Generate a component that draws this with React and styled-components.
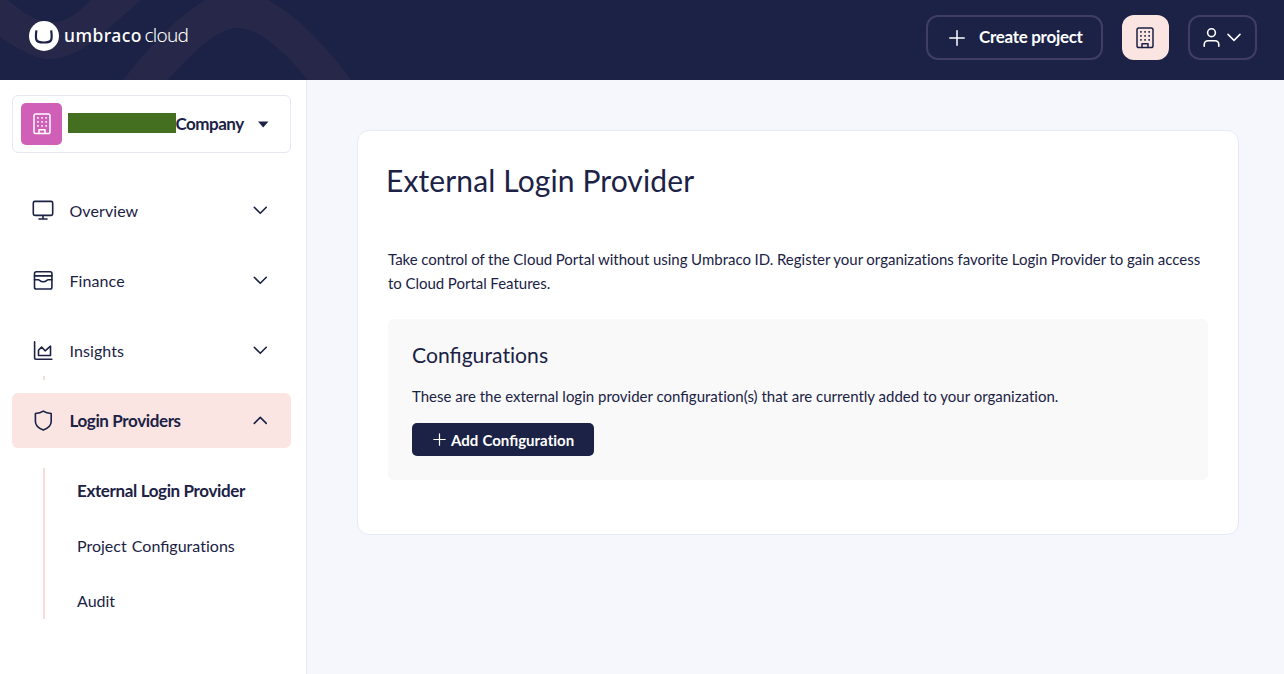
import React from "react";
import styled, { createGlobalStyle } from "styled-components";

const navy = "#1b2245";
const blush = "#fbe5e3";

const GlobalStyle = createGlobalStyle`
  * { box-sizing: border-box; }
  body { margin: 0; background: #f6f7fc; color: ${navy}; font-family: Lato, "Liberation Sans", sans-serif; }
  button { font: inherit; color: inherit; cursor: pointer; padding: 0; }
  h1, h2, p, ul { margin: 0; padding: 0; font-weight: 400; }
  ul { list-style: none; }
  svg { display: block; flex: none; }
`;

const Page = styled.div`
  display: flex;
  flex-direction: column;
  height: 674px;
  overflow: hidden;
`;

const Header = styled.header`
  position: relative;
  flex: none;
  height: 80px;
  padding: 0 27px 5px 28px;
  display: flex;
  align-items: center;
  justify-content: space-between;
  background: ${navy};
`;

const Waves = styled.svg`
  position: absolute;
  left: 0;
  top: 0;
`;

const Brand = styled.div`
  position: relative;
  display: flex;
  align-items: center;
  color: #fff;
  padding-bottom: 3px;
`;

const BrandText = styled.span`
  font: ${(p) => (p.$light ? "300 19px" : "500 17.5px")}/24px "Noto Sans", "Open Sans", sans-serif;
  letter-spacing: ${(p) => (p.$light ? "-0.7px" : "0.45px")};
  margin-left: ${(p) => (p.$light ? 2.5 : 5)}px;
  margin-top: -2px;
`;

const Actions = styled.div`
  position: relative;
  display: flex;
  align-items: center;
  gap: 19px;
`;

const HeaderButton = styled.button`
  display: flex;
  align-items: center;
  width: ${(p) => p.$width}px;
  height: 45px;
  padding-left: ${(p) => p.$inset}px;
  border-radius: 12px;
  border: ${(p) => (p.$active ? "0" : "2px solid #413e66")};
  background: ${(p) => (p.$active ? blush : "transparent")};
  color: ${(p) => (p.$active ? navy : "#fff")};
  font-weight: 700;
  font-size: 17px;
  letter-spacing: -0.3px;
  line-height: 24px;
`;

const ButtonLabel = styled.span`
  margin: -2px 0 0 14px;
  white-space: nowrap;
`;

const Body = styled.div`
  display: flex;
  flex: 1;
  min-height: 0;
`;

const Sidebar = styled.aside`
  flex: none;
  width: 307px;
  padding: 15px 15px 0 12px;
  background: #fff;
  border-right: 1px solid #e6e8f5;
`;

const CompanySelect = styled.button`
  display: flex;
  align-items: center;
  width: 279px;
  height: 58px;
  padding-left: 8px;
  background: #fff;
  border: 1px solid #e7e7f6;
  border-radius: 6px;
`;

const CompanyBadge = styled.span`
  display: grid;
  place-items: center;
  width: 41px;
  height: 42px;
  border-radius: 5px;
  background: #d05fb8;
  color: #fff;
`;

const Redaction = styled.span`
  width: 108px;
  height: 20px;
  margin: -2px 0 0 6px;
  background: #456f20;
`;

const CompanyName = styled.span`
  width: 82px;
  margin: -1px 0 0 -0.5px;
  text-align: left;
  font-weight: 700;
  font-size: 17px;
  letter-spacing: -0.5px;
  line-height: 24px;
`;

const Nav = styled.nav`
  display: flex;
  flex-direction: column;
  gap: 15px;
  margin-top: 30px;
`;

const NavItem = styled.a`
  position: relative;
  display: flex;
  align-items: center;
  height: 55px;
  padding: 0 24px 0 19px;
  border-radius: 6px;
  background: ${(p) => (p.$active ? blush : "transparent")};
  font-weight: ${(p) => (p.$active ? 700 : 400)};
  font-size: ${(p) => (p.$active ? 17 : 16)}px;
  letter-spacing: ${(p) => (p.$active ? "-0.38px" : "0.08px")};

  &::before {
    content: "";
    display: ${(p) => (p.$active ? "block" : "none")};
    position: absolute;
    left: 31px;
    top: -17px;
    width: 2px;
    height: 4px;
    background: #fbdcda;
  }
`;

const NavLabel = styled.span`
  flex: 1;
  margin: 1px 0 0 14.5px;
  line-height: 24px;
`;

const SubNav = styled.ul`
  margin: 5px 0 0 31px;
  height: 151px;
  border-left: 2px solid #fbdcda;
  padding-left: 32px;
`;

const SubItem = styled.li`
  height: 55px;
  padding-top: 11px;
  line-height: 24px;
  font-size: ${(p) => (p.$active ? 17 : 16)}px;
  letter-spacing: ${(p) => (p.$active ? "-0.36px" : "normal")};
  word-spacing: ${(p) => (p.$active ? "normal" : "1px")};
  font-weight: ${(p) => (p.$active ? 700 : 400)};
`;

const Main = styled.main`
  flex: 1;
  padding: 50px 45px 0 50px;
`;

const Card = styled.section`
  height: 405px;
  padding: 27px 30px 0;
  background: #fff;
  border: 1px solid #e7e9f6;
  border-radius: 12px;
`;

const Title = styled.h1`
  margin-left: -2px;
  font-size: 30px;
  line-height: 45px;
  letter-spacing: 0.12px;
`;

const Text = styled.p`
  font-size: 15px;
  line-height: 24px;
`;

const Intro = styled(Text)`
  margin-top: 44px;
  font-variant-ligatures: none;
  word-spacing: -0.27px;
`;

const Panel = styled.section`
  margin-top: 24px;
  height: 161px;
  padding: 19px 24px;
  border-radius: 6px;
  background: #f9f9f9;
`;

const PanelTitle = styled.h2`
  font-size: 21.15px;
  line-height: 35px;
  margin-bottom: 11px;
`;

const AddButton = styled.button`
  display: flex;
  align-items: center;
  gap: 5px;
  width: 182px;
  height: 33px;
  margin-top: 15px;
  padding-left: 21px;
  border: 0;
  border-radius: 5px;
  background: ${navy};
  color: #fff;
  font-weight: 700;
  font-size: 15px;
  word-spacing: 0.5px;
  line-height: 24px;
  white-space: nowrap;
`;

const NoLigature = styled.span`
  font-variant-ligatures: none;
`;

// Lato joins "t" and "i" by default; keep that pair apart while leaving "fi" joined.
const Copy = ({ children }) => (
  <span>
    {children.split(/(ti)/).map((part, i) => (part === "ti" ? <NoLigature key={i}>{part}</NoLigature> : part))}
  </span>
);

const Icon = ({ w, h, sw = 1.6, children }) => (
  <svg width={w} height={h} viewBox={`0 0 ${w} ${h}`} fill="none" stroke="currentColor" strokeWidth={sw} strokeLinecap="round" strokeLinejoin="round">
    {children}
  </svg>
);

const Building = () => (
  <Icon w={18} h={22} sw={1.5}>
    <rect x="1" y="1" width="16" height="19.6" rx="1.8" />
    <path d="M6 20.500v-3.800h6v3.800" />
    <g fill="currentColor" stroke="none">
      {[4.1, 8.2, 12.3].map((x) => [4, 8, 12].map((y) => <rect key={`${x}-${y}`} x={x} y={y} width="1.7" height="1.7" rx=".4" />))}
    </g>
  </Icon>
);

const Plus = ({ size, sw }) => (
  <Icon w={size} h={size} sw={sw}>
    <path d={`M${size / 2} .8V${size - 0.8}M.8 ${size / 2}H${size - 0.8}`} />
  </Icon>
);

const Chevron = ({ up }) => (
  <Icon w={14} h={10} sw={1.6}>
    <path d={up ? "M1.300 7.400 7.300 1.400l6 6" : "M1.300 1.300l6 6 6-6"} />
  </Icon>
);

const navIcons = {
  Overview: (
    <>
      <rect x="2.300" y="2.400" width="19.400" height="14" rx="1.6" />
      <path d="M12 16.600v3.200M8 20h8" />
    </>
  ),
  Finance: (
    <>
      <rect x="3.500" y="2.800" width="17.4" height="17.2" rx="1.8" />
      <path d="M3.500 6.900h17.4M3.500 10.700h3.800c1.300 0 1.500 2.100 4.900 2.100s3.600-2.100 4.900-2.100h3.800" />
    </>
  ),
  Insights: (
    <>
      <path d="M3.600 2.900v16.200q0 1.200 1.200 1.200h16" />
      <path d="M7.500 16.500v-5.300L10.600 8.100l3.500 3.700 5.400-4.600v9.300Z" />
    </>
  ),
  "Login Providers": <path d="M12.300 2.100c2.200 1.500 4.800 2.200 7.900 2.400v8c0 3.800-3.400 6.800-7.900 8.600-4.500-1.800-7.900-4.800-7.900-8.600v-8c3.100-.2 5.700-.9 7.900-2.400Z" />,
};

const entries = ["Overview", "Finance", "Insights", "Login Providers"];
const subEntries = ["External Login Provider", "Project Configurations", "Audit"];

export default function App() {
  return (
    <Page>
      <GlobalStyle />
      <Header>
        <Waves width="380" height="80" viewBox="0 0 380 80" fill="#272849">
          <path d="M0 0H8C28 17 39 22 53 22S76 14 91 0H141C113 24 96 42 80 50C65 58 57 59 48 59S27 55 0 37Z" />
          <path d="M123 80C151 45 174 20 205 0H268C299 17 327 47 351 80H308C280 46 256 28 238 28C219 28 197 48 168 80Z" />
        </Waves>
        <Brand>
          <svg width="31" height="32" viewBox="0 0 31 32">
            <circle cx="16" cy="16" r="15" fill="#fff" />
            <path d="M8.400 10.300c-.6 4.500-.6 8 .1 9.700.8 2.100 3.400 2.500 7.300 2.500s6.500-.4 7.300-2.500c.7-1.700.7-5.200.1-9.700" fill="none" stroke={navy} strokeWidth="2.200" />
          </svg>
          <BrandText>umbraco</BrandText>
          <BrandText $light>cloud</BrandText>
        </Brand>
        <Actions>
          <HeaderButton $width={177} $inset={21}>
            <Plus size={16} sw={1.500} />
            <ButtonLabel>Create project</ButtonLabel>
          </HeaderButton>
          <HeaderButton $width={47} $inset={14} $active aria-label="Organization">
            <Building />
          </HeaderButton>
          <HeaderButton $width={69} $inset={13} aria-label="Account">
            <Icon w={17} h={20} sw={1.600}>
              <circle cx="8.500" cy="4.700" r="3.900" />
              <path d="M1.200 18.300v-1.500c0-2.700 1.500-4 4-4h6.600c2.500 0 4 1.300 4 4v1.500" />
            </Icon>
            <svg width="22" height="10" viewBox="-8 0 22 10" fill="none" stroke="currentColor" strokeWidth="1.500" strokeLinecap="round">
              <path d="M0 1.400 6 7.400l6-6" />
            </svg>
          </HeaderButton>
        </Actions>
      </Header>
      <Body>
        <Sidebar>
          <CompanySelect>
            <CompanyBadge><Building /></CompanyBadge>
            <Redaction />
            <CompanyName>Company</CompanyName>
            <svg width="11" height="7" viewBox="0 0 11 7"><path d="M0 .500h10.400L5.200 6.500Z" fill={navy} /></svg>
          </CompanySelect>
          <Nav>
            {entries.map((name) => {
              const active = name === "Login Providers";
              return (
                <NavItem key={name} $active={active}>
                  <Icon w={24} h={24} sw={1.600}>{navIcons[name]}</Icon>
                  <NavLabel>{name}</NavLabel>
                  <Chevron up={active} />
                </NavItem>
              );
            })}
            <SubNav>
              {subEntries.map((name, i) => <SubItem key={name} $active={i === 0}><Copy>{name}</Copy></SubItem>)}
            </SubNav>
          </Nav>
        </Sidebar>
        <Main>
          <Card>
            <Title>External Login Provider</Title>
            <Intro>Take control of the Cloud Portal without using Umbraco ID. Register your organizations favorite Login Provider to gain access to Cloud Portal Features.</Intro>
            <Panel>
              <PanelTitle><Copy>Configurations</Copy></PanelTitle>
              <Text><Copy>These are the external login provider configuration(s) that are currently added to your organization.</Copy></Text>
              <AddButton><Plus size={13} sw={1.200} /><Copy>Add Configuration</Copy></AddButton>
            </Panel>
          </Card>
        </Main>
      </Body>
    </Page>
  );
}
